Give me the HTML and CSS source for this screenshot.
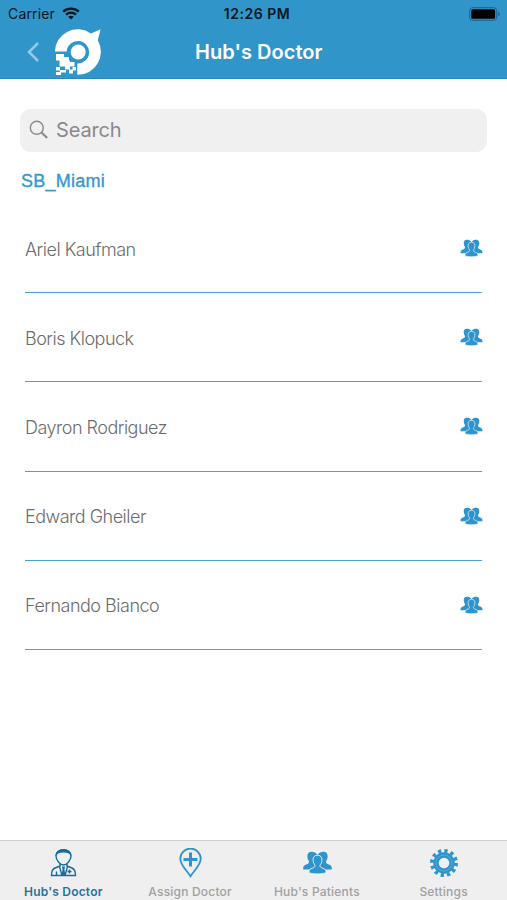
FILE: index.html
```html
<!DOCTYPE html>
<html lang="en">
<head>
<meta charset="utf-8">
<title>Hub's Doctor</title>
<link rel="stylesheet" href="styles.css">
</head>
<body>
<svg class="defs" aria-hidden="true">
  <symbol id="people" viewBox="0 0 30 24">
    <path d="M9 1.200C6 1.200 4.600 3.300 4.900 6.200c.1 1.800.6 2.900 1.300 4 .6 1.200.2 2.500-.9 3L2.500 14.500C1 15.200.6 16.700.6 19H15V4C13.500 2 11.500 1.200 9 1.200zM21 1.200c3 0 4.400 2.100 4.100 5-.1 1.800-.6 2.900-1.300 4-.6 1.200-.2 2.500.9 3l2.800 1.300c1.500.7 1.900 2.200 1.900 4.500H15V4c1.500-2 3.500-2.800 6-2.800z"/>
    <path class="gap" d="M13 1h4l-2 3.500z"/>
    <path class="front" d="M15 4.600c-3.400 0-4.700 2.400-4.400 5.200.1 2 .8 3.300 1.600 4.400.7 1.200.2 2.200-1 2.800l-2.800 1.200c-1.600.8-1.900 2-1.900 4.100 4.500 1.400 12.500 1.400 17 0 0-2.100-.3-3.300-1.900-4.100l-2.800-1.200c-1.200-.6-1.700-1.600-1-2.800.8-1.100 1.500-2.400 1.600-4.400.3-2.800-1-5.200-4.400-5.200z"/>
  </symbol>
</svg>
<header class="header">
  <div class="status">
    <div class="carrier"><span>Carrier</span>
      <svg class="wifi" viewBox="0 0 18 13"><path d="M1.200 4.600c4.400-4 11.200-4 15.600 0M4 7.700c2.900-2.600 7.100-2.600 10 0" fill="none" stroke="#061620" stroke-width="2.300"/><path d="M6.200 9.700c1.600-1.400 4-1.400 5.600 0L9 12.600z" fill="#061620"/></svg>
    </div>
    <div class="time">12:26 PM</div>
    <svg class="battery" viewBox="0 0 32 14"><rect x=".7" y=".7" width="27" height="12.600" rx="3" fill="none" stroke="#1c618a"/><rect x="2.300" y="2.300" width="23.800" height="9.400" rx="1.500"/><path d="M29.200 4.800c2 .7 2 3.700 0 4.400z" fill="#1c618a"/></svg>
  </div>
  <div class="nav">
    <svg class="back" viewBox="0 0 14 22"><path d="M12 2 3 11l9 9" fill="none" stroke="#93cbe9" stroke-width="2.500"/></svg>
    <svg class="logo" viewBox="0 0 48 48">
      <g fill="#fff">
        <path d="M.8 23.500A23 23 0 0 1 37 5.400L46.600 1.200 43.800 12.300A23 23 0 0 1 23.300 46.800V35.500A11.300 11.300 0 1 0 12.600 23.500z"/>
        <circle cx="24.200" cy="24" r="7.500"/>
        <path d="M2 26h8v6.500H2zM5.500 32.500h10.500v6H5.500zM10 29h5v3.500h-5zM2 39h4v3.500H2zM11 38.500h5v3h-5zM16 34h4.500v4.500H16zM6 42h6v2.500H6zM15 41.500h3.500V39H22v3.500h-3v3h-4zM2 44h5v3H2z"/>
      </g>
    </svg>
    <h1>Hub's Doctor</h1>
  </div>
</header>
<main>
  <div class="search">
    <svg viewBox="0 0 20 20"><circle cx="7.800" cy="7.800" r="6.500" fill="none" stroke="#8b8b8f" stroke-width="1.400"/><path d="m12.500 12.500 5.700 5.500" stroke="#8b8b8f" stroke-width="2.200"/></svg>
    <span>Search</span>
  </div>
  <h2><span>SB_Miami</span></h2>
  <ul class="list">
    <li><span>Ariel Kaufman</span><svg><use href="#people"/></svg></li>
    <li><span>Boris Klopuck</span><svg><use href="#people"/></svg></li>
    <li><span>Dayron Rodriguez</span><svg><use href="#people"/></svg></li>
    <li><span>Edward Gheiler</span><svg><use href="#people"/></svg></li>
    <li><span>Fernando Bianco</span><svg><use href="#people"/></svg></li>
  </ul>
</main>
<nav class="tabs">
  <div class="tab active">
    <svg viewBox="0 0 30 30"><g fill="none" stroke="#176b9f" stroke-width="1.400"><path d="M8 8c0 4.500 4.500 9 7.500 9S23 12.500 23 8c0-3.500-3-6.300-7.500-6.300S8 4.500 8 8zM12 16v2l-5 2c-2.500 1-3.500 4-3.500 7.500h24c0-3.500-1-6.500-3.500-7.500l-5-2v-2M11.500 18.500l2.500 9M19.500 18.500l-2.500 9M8.500 23.500v4M19.500 23.500h4M21.500 21.500v4"/></g><path d="M7.500 8C7.500 3.800 10.500 1.200 15.500 1.200S23.500 3.800 23.500 8L21 5.500c-3.500-1.500-7.500-1.500-11 0zM14 18.500h3l-.6 3 1 6h-3.800l1-6z" fill="#176b9f"/></svg>
    <span>Hub's Doctor</span>
  </div>
  <div class="tab">
    <svg viewBox="0 0 30 30"><path d="M15.500 28.300C12.500 23 5.300 17.500 5.300 10.800a10.200 10.200 0 0 1 20.400 0C25.700 17.500 18.500 23 15.500 28.300z" fill="none" stroke="#2f94cd" stroke-width="1.800"/><path d="M15.500 4.500v14M8.500 11.500h14" stroke="#2f94cd" stroke-width="3"/></svg>
    <span>Assign Doctor</span>
  </div>
  <div class="tab">
    <svg><use href="#people" x=".5" y="2.600" width="30" height="24"/></svg>
    <span>Hub's Patients</span>
  </div>
  <div class="tab">
    <svg viewBox="-15 -15 30 30"><g fill="none" stroke="#2f94cd"><circle r="12" stroke-width="4" stroke-dasharray="3.200 3.083"/><circle r="8" stroke-width="5.400"/><circle r="8" stroke="#6bb4de" stroke-width=".6"/></g></svg>
    <span>Settings</span>
  </div>
</nav>
</body>
</html>
```
FILE: styles.css
```css
* { box-sizing: border-box; }
body {
  margin: 0;
  height: 900px;
  display: flex;
  flex-direction: column;
  background: #fff;
  font-family: Inter, "Liberation Sans", sans-serif;
  white-space: nowrap;
  overflow: hidden;
}
svg { display: block; flex: none; }
.defs { width: 0; height: 0; position: absolute; }
h1, h2, ul { margin: 0; padding: 0; }
.header { height: 79px; background: #3095c9; border-bottom: 1px solid #2789bb; flex: none; }
.status {
  height: 27px;
  display: grid;
  grid-template-columns: 1fr auto 1fr;
  align-items: center;
  padding: 0 6px 0 8px;
  color: #061620;
}
.carrier { display: flex; align-items: center; gap: 7px; font-size: 14px; letter-spacing: .15px; }
.wifi { width: 18px; height: 13px; }
.time { font-size: 14px; font-weight: 600; letter-spacing: .5px; padding-left: 5px; }
.battery { width: 32px; height: 14px; justify-self: end; }
.nav { display: flex; height: 51px; padding-left: 26px; align-items: flex-start; }
.back { width: 14px; height: 22px; margin-top: 14px; }
.logo { width: 48px; height: 48px; margin-left: 14px; margin-top: 1px; }
h1 { color: #fff; font-size: 20px; line-height: 28px; font-weight: 600; margin: 11px 0 0 93px; letter-spacing: .05px; }
main { flex: 1; padding: 30px 20px 0; }
.search {
  height: 43px;
  display: flex;
  align-items: center;
  padding: 0 0 2px 9px;
  gap: 7px;
  border-radius: 11px;
  background: #f0f0f1;
  color: #89898d;
  font-size: 20px;
  letter-spacing: -.15px;
}
.search svg { width: 20px; height: 20px; }
h2 { color: #3498c9; font: 500 18px/26px "Liberation Sans", sans-serif; letter-spacing: .25px; -webkit-text-stroke: .35px #3498c9; margin-top: 16px; padding-left: 1px; }
.list { list-style: none; padding: 10px 5px 0; }
.list li {
  height: 89.200px;
  display: flex;
  align-items: center;
  justify-content: space-between;
  padding-top: 2px;
  border-bottom: 1.500px solid #4aa2cf;
  color: #6c6c6c;
  font-size: 18px;
  font-weight: 300;
  letter-spacing: -.5px;
}
.list svg { width: 23px; height: 20px; fill: #2f94cd; position: relative; top: -1px; left: 1px; }
.front { stroke: #eef6fa; stroke-width: .9px; }
.gap { fill: #eef6fa; }
.tabs { height: 60px; display: grid; grid-template-columns: repeat(4, 1fr); background: #efefef; border-top: 1px solid #cfcfcf; }
.tab { display: flex; flex-direction: column; align-items: center; padding-top: 7px; color: #a0a0a0; font-size: 12px; font-weight: 500; letter-spacing: .2px; }
.tab svg { width: 30px; height: 30px; fill: #2f94cd; }
.tab span { line-height: 16px; margin-top: 6px; }
.active { color: #26719e; font-weight: 600; }
```
